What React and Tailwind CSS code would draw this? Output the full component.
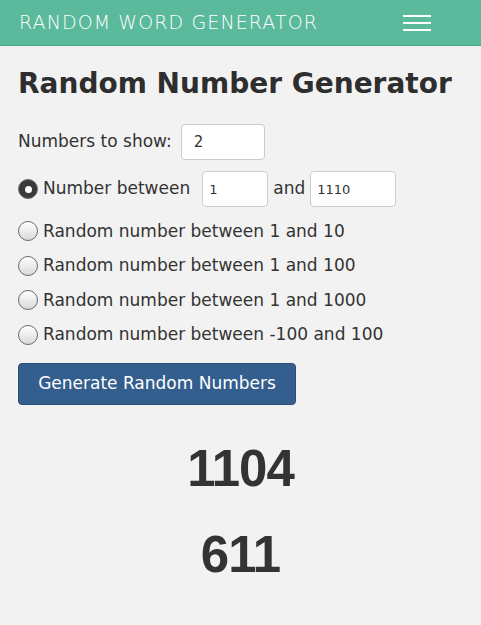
import { useState } from 'react';

const options = [
  { id: 'custom', label: 'Number between' },
  { id: 'r10', label: 'Random number between 1 and 10' },
  { id: 'r100', label: 'Random number between 1 and 100' },
  { id: 'r1000', label: 'Random number between 1 and 1000' },
  { id: 'rneg', label: 'Random number between -100 and 100' },
];

function Radio({ checked, onClick }) {
  return (
    <button
      onClick={onClick}
      className={`w-[20px] h-[20px] rounded-full border border-[#6b6b6b] shrink-0 flex items-center justify-center ${
        checked ? 'bg-[#3a3a3a]' : 'bg-gradient-to-b from-white to-[#d9d9d9]'
      }`}
    >
      {checked && <span className="w-[7px] h-[7px] rounded-full bg-white" />}
    </button>
  );
}

export default function App() {
  const [count, setCount] = useState('2');
  const [min, setMin] = useState('1');
  const [max, setMax] = useState('1110');
  const [mode, setMode] = useState('custom');
  const [results] = useState([1104, 611]);

  return (
    <div className="min-h-[625px] bg-[#f2f2f2] text-[#333] font-['DejaVu_Sans',sans-serif]">
      <header className="h-[46px] bg-[#5bb99c] border-b border-[#4ea58a] flex items-center justify-between pl-[19px] pr-[50px]">
        <span className="text-white text-[19px] font-light tracking-[1.1px]">RANDOM WORD GENERATOR</span>
        <div className="flex flex-col gap-[5px]">
          <span className="block w-[28px] h-[2px] bg-white" />
          <span className="block w-[28px] h-[2px] bg-white" />
          <span className="block w-[28px] h-[2px] bg-white" />
        </div>
      </header>

      <main className="px-[18px]">
        <h1 className="text-[28px] font-bold mt-[17px] mb-[19px] text-[#2e2e2e]">Random Number Generator</h1>

        <div className="flex items-center gap-[9px] text-[17px]">
          <span>Numbers to show:</span>
          <input
            value={count}
            onChange={(e) => setCount(e.target.value)}
            className="w-[84px] h-[36px] border border-[#ccc] rounded bg-white px-[12px] text-[15px] outline-none"
          />
        </div>

        <div className="mt-[11px] flex flex-col text-[17px]">
          {options.map((o) =>
            o.id === 'custom' ? (
              <div key={o.id} className="flex items-center h-[36px] mb-[7px]">
                <Radio checked={mode === o.id} onClick={() => setMode(o.id)} />
                <span className="ml-[5px] mr-[12px]">{o.label}</span>
                <input
                  value={min}
                  onChange={(e) => setMin(e.target.value)}
                  className="w-[66px] h-[36px] border border-[#ccc] rounded bg-white px-[6px] text-[13px] outline-none"
                />
                <span className="mx-[5px]">and</span>
                <input
                  value={max}
                  onChange={(e) => setMax(e.target.value)}
                  className="w-[86px] h-[36px] border border-[#ccc] rounded bg-white px-[6px] text-[13px] outline-none"
                />
              </div>
            ) : (
              <div key={o.id} className="flex items-center h-[34.5px]">
                <Radio checked={mode === o.id} onClick={() => setMode(o.id)} />
                <span className="ml-[5px]">{o.label}</span>
              </div>
            )
          )}
        </div>

        <button className="mt-[11px] w-[278px] h-[42px] bg-[#335e8d] border border-[#2b5079] rounded text-white text-[17px]">
          Generate Random Numbers
        </button>

        <div className="mt-[36px] flex flex-col items-center gap-[30px] font-['Liberation_Sans',sans-serif]">
          {results.map((n, i) => (
            <div key={i} className="text-[51px] font-bold leading-[56px] text-[#333] tracking-[-1px]">
              {n}
            </div>
          ))}
        </div>
      </main>
    </div>
  );
}
